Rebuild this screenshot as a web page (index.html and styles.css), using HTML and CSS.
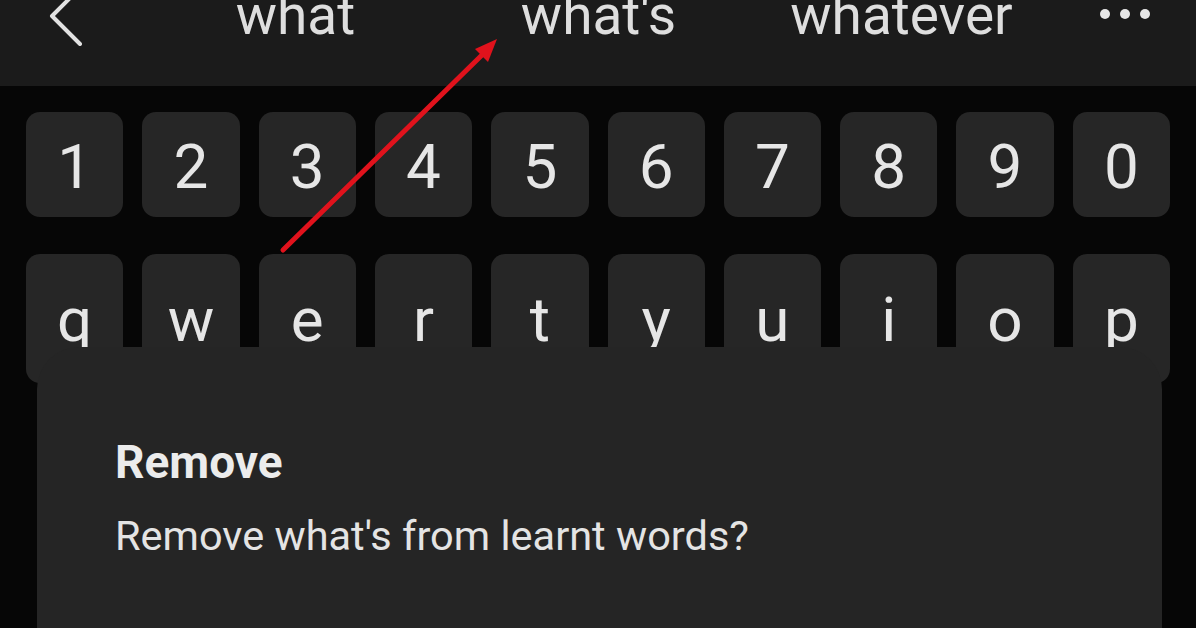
FILE: index.html
```html
<!DOCTYPE html>
<html lang="en">
<head>
<meta charset="utf-8">
<title>Keyboard – Remove learnt word</title>
<link rel="stylesheet" href="styles.css">
</head>
<body>
<div class="screen">
  <div class="topbar">
    <div class="back">
      <svg class="chev" width="40" height="60" viewBox="0 0 40 60">
        <polyline points="32,2 4,30 32,58" fill="none" stroke="#e2e2e2" stroke-width="4" stroke-linecap="round" stroke-linejoin="round"/>
      </svg>
    </div>
    <div class="word">what</div>
    <div class="word">what's</div>
    <div class="word">whatever</div>
    <div class="more">
      <span class="dot"></span><span class="dot"></span><span class="dot"></span>
    </div>
  </div>

  <div class="keys">
    <div class="row row-num">
      <div class="key">1</div><div class="key">2</div><div class="key">3</div><div class="key">4</div><div class="key">5</div>
      <div class="key">6</div><div class="key">7</div><div class="key">8</div><div class="key">9</div><div class="key">0</div>
    </div>
    <div class="row row-letters">
      <div class="key">q</div><div class="key">w</div><div class="key">e</div><div class="key">r</div><div class="key">t</div>
      <div class="key">y</div><div class="key">u</div><div class="key">i</div><div class="key">o</div><div class="key">p</div>
    </div>
  </div>

  <div class="dialog">
    <div class="dialog-title">Remove</div>
    <div class="dialog-text">Remove what's from learnt words?</div>
  </div>

  <svg class="arrow" width="1196" height="628" viewBox="0 0 1196 628">
    <line x1="283" y1="250" x2="482" y2="55" stroke="#e0121c" stroke-width="5" stroke-linecap="round"/>
    <polygon points="497,39 488,62 475,49" fill="#e0121c"/>
  </svg>
</div>
</body>
</html>
```
FILE: styles.css
```css
html, body {
  margin: 0;
  padding: 0;
  background: #060606;
}
.screen {
  position: relative;
  width: 1196px;
  height: 628px;
  overflow: hidden;
  background: #060606;
  font-family: Roboto, "Noto Sans", "Liberation Sans", sans-serif;
  color: #e4e4e4;
}
.topbar {
  height: 86px;
  background: #1b1b1b;
  display: grid;
  grid-template-columns: 144px 303px 303px 303px 1fr;
  overflow: hidden;
}
.back {
  display: flex;
  padding-left: 48px;
  margin-top: -14px;
}
.word {
  text-align: center;
  font-size: 55px;
  line-height: 55px;
  margin-top: -12px;
  color: #dedede;
  white-space: nowrap;
}
.more {
  display: flex;
  justify-content: center;
  gap: 10px;
  padding-top: 9px;
}
.dot {
  width: 10px;
  height: 10px;
  border-radius: 50%;
  background: #e6e6e6;
}
.keys {
  padding: 26px 26px 0;
  display: flex;
  flex-direction: column;
  gap: 37px;
}
.row {
  display: grid;
  grid-template-columns: repeat(10, 1fr);
  column-gap: 19px;
}
.key {
  background: #262626;
  border-radius: 14px;
  display: flex;
  align-items: center;
  justify-content: center;
  font-size: 62px;
  line-height: 1;
  color: #e6e6e6;
}
.row-num .key {
  height: 101px;
  padding-top: 4px;
}
.row-letters .key {
  height: 127px;
  padding-top: 2px;
}
.dialog {
  position: absolute;
  left: 37px;
  top: 347px;
  width: 1125px;
  height: 420px;
  background: #252525;
  border-radius: 42px;
  padding: 92px 78px 0;
  box-sizing: border-box;
}
.dialog-title {
  font-size: 46px;
  line-height: 1;
  font-weight: 700;
  color: #ececec;
}
.dialog-text {
  margin-top: 30px;
  font-size: 41.5px;
  line-height: 1;
  color: #e4e4e4;
}
.arrow {
  position: absolute;
  left: 0;
  top: 0;
  pointer-events: none;
}
```
